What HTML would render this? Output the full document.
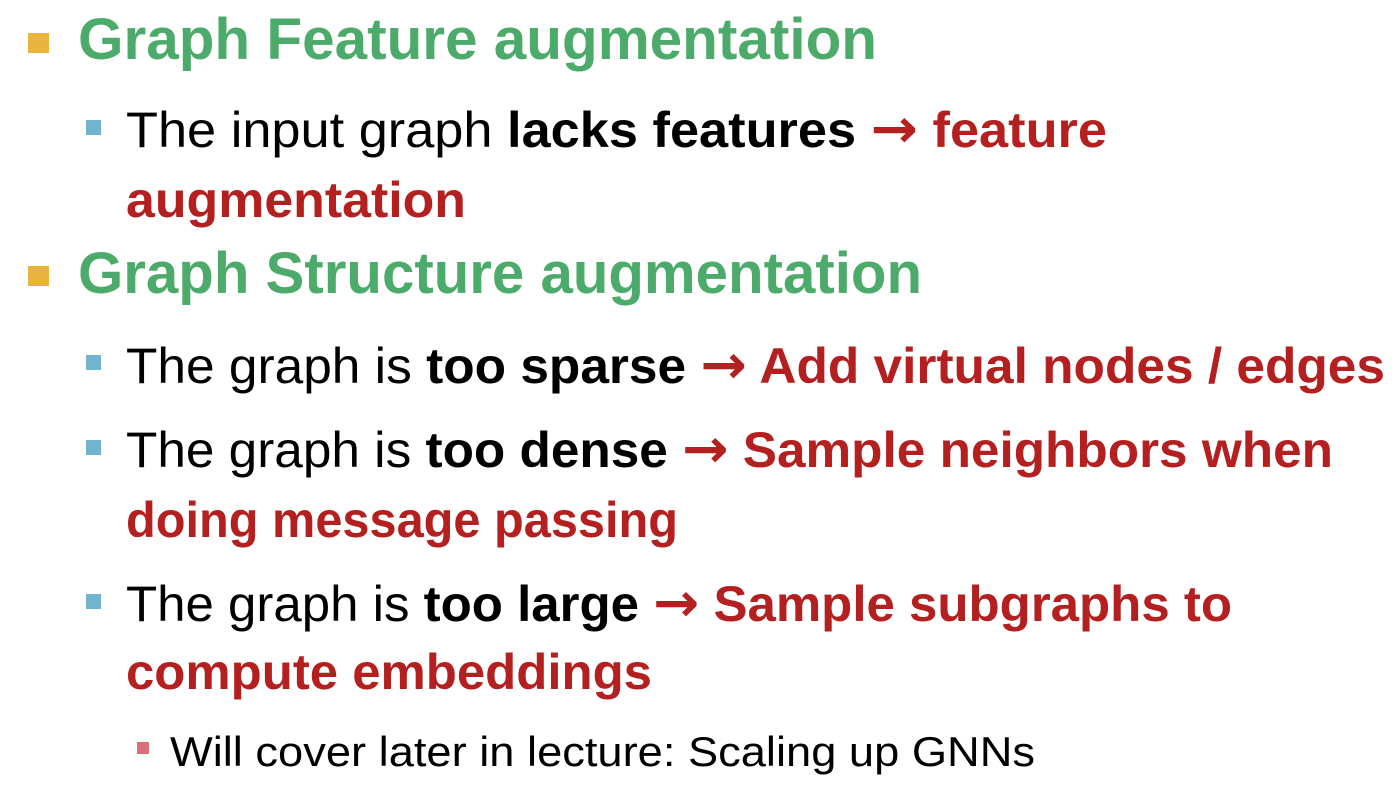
<!DOCTYPE html>
<html><head><meta charset="utf-8">
<style>
html,body{margin:0;padding:0;background:#fff;}
body{width:1400px;height:800px;position:relative;overflow:hidden;font-family:"Liberation Sans",sans-serif;}
.l{position:absolute;white-space:nowrap;line-height:1;transform-origin:0 0;color:#000;}
.h{font-weight:bold;color:#4cab6a;font-size:58px;}
.s{font-size:50px;}
.t{font-size:42px;}
b{font-weight:bold;}
.r{color:#b3201f;font-weight:bold;}
.ar{font-family:"DejaVu Sans",sans-serif;font-weight:bold;font-size:54px;line-height:0.9;}
.bul{position:absolute;}
</style></head><body>
<div class="bul" style="left:28px;top:33px;width:21px;height:20px;background:#e9b43c"></div>
<div class="bul" style="left:28px;top:266px;width:21px;height:20px;background:#e9b43c"></div>
<div class="bul" style="left:86px;top:120px;width:15px;height:15px;background:#72b3d0"></div>
<div class="bul" style="left:86px;top:355px;width:15px;height:15px;background:#72b3d0"></div>
<div class="bul" style="left:86px;top:440px;width:15px;height:15px;background:#72b3d0"></div>
<div class="bul" style="left:86px;top:594px;width:15px;height:15px;background:#72b3d0"></div>
<div class="bul" style="left:137px;top:742px;width:12px;height:12px;background:#d9707c"></div>

<div class="l h" style="left:78px;top:11px">Graph Feature augmentation</div>
<div class="l s" style="left:126px;top:105px">The input graph <b>lacks features</b> <span class="r"><span class="ar">→</span> feature</span></div>
<div class="l s r" style="left:126px;top:175px">augmentation</div>
<div class="l h" style="left:78px;top:245px">Graph Structure augmentation</div>
<div class="l s" style="left:126px;top:341px">The graph is <b>too sparse</b> <span class="r"><span class="ar">→</span> Add virtual nodes / edges</span></div>
<div class="l s" style="left:126px;top:425px">The graph is <b>too dense</b> <span class="r"><span class="ar">→</span> Sample neighbors when</span></div>
<div class="l s r" style="left:126px;top:495px">doing message passing</div>
<div class="l s" style="left:126px;top:579px">The graph is <b>too large</b> <span class="r"><span class="ar">→</span> Sample subgraphs to</span></div>
<div class="l s r" style="left:126px;top:647px">compute embeddings</div>
<div class="l t" style="left:170px;top:731px">Will cover later in lecture: Scaling up GNNs</div>
<script>
var w=[799,981,340,844,1259,1207,552,1106,526,865];
var els=document.querySelectorAll('.l');
for(var i=0;i<els.length;i++){var a=els[i].getBoundingClientRect().width;els[i].style.transform='scaleX('+(w[i]/a)+')';}
</script>
</body></html>
